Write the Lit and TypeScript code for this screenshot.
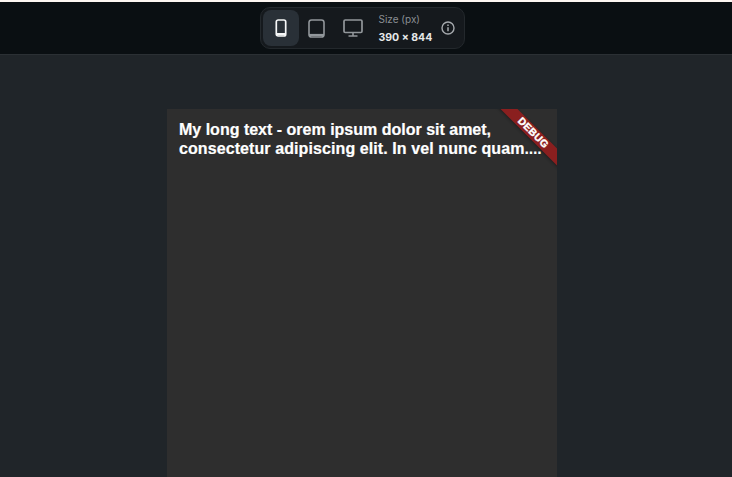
import { LitElement, html, css } from 'lit';
import { customElement } from 'lit/decorators.js';

@customElement('app-root')
export class AppRoot extends LitElement {
  static styles = css`
    :host {
      display: block;
      height: 477px;
      overflow: hidden;
      background: #202529;
      font-family: 'Inter', 'Liberation Sans', sans-serif;
    }

    .topline {
      height: 2px;
      background: #fdf6f2;
    }

    .toolbar {
      height: 53px;
      box-sizing: border-box;
      background: #0a0f12;
      border-bottom: 1px solid #2b3034;
      display: flex;
      justify-content: center;
      padding: 5px 8px 0 0;
    }

    .switcher {
      width: 205px;
      height: 42px;
      box-sizing: border-box;
      padding: 2px;
      display: flex;
      align-items: center;
      background: #15191d;
      border: 1px solid #23282c;
      border-radius: 10px;
    }

    .device {
      width: 36px;
      height: 36px;
      display: flex;
      align-items: center;
      justify-content: center;
      border-radius: 8px;
      color: #92979b;
    }

    .device.active {
      background: #293037;
      color: #f6f7f8;
    }

    .size {
      margin-left: 8px;
      width: 54px;
      display: flex;
      flex-direction: column;
      gap: 6px;
      padding-top: 1px;
    }

    .size-label {
      font-size: 10px;
      line-height: 12px;
      color: #8a8f94;
    }

    .size-value {
      font-size: 10.5px;
      line-height: 13px;
      font-weight: 700;
      color: #e6e8e9;
      white-space: nowrap;
    }

    .info {
      margin-left: 8px;
      display: block;
      color: #a5a9ad;
    }

    .stage {
      display: flex;
      justify-content: center;
      padding: 54px 8px 0 0;
    }

    .phone {
      position: relative;
      width: 390px;
      height: 844px;
      flex: none;
      box-sizing: border-box;
      padding: 11px 12px;
      background: #2e2e2e;
      overflow: hidden;
    }

    .title {
      margin: 0;
      font-family: 'Liberation Sans', Arial, sans-serif;
      font-size: 16px;
      line-height: 19px;
      font-weight: 700;
      color: #ffffff;
      -webkit-text-stroke: 0.2px #ffffff;
    }

    .line {
      display: block;
      white-space: nowrap;
    }

    .line.wide {
      letter-spacing: 0.09px;
    }

    .dots {
      letter-spacing: -0.2px;
      -webkit-text-stroke: 0;
    }

    .banner {
      position: absolute;
      top: 18px;
      right: -36px;
      width: 120px;
      height: 12px;
      transform: rotate(45deg);
      background: #8a1f1f;
      box-shadow: 0 1px 3px rgba(0, 0, 0, 0.35);
      color: #ffffff;
      font-family: 'Liberation Sans', Arial, sans-serif;
      font-size: 10.2px;
      line-height: 12px;
      font-weight: 900;
      text-align: center;
      letter-spacing: 0.4px;
      -webkit-text-stroke: 0.4px #ffffff;
    }
  `;

  render() {
    return html`
      <div class="topline"></div>
      <div class="toolbar">
        <div class="switcher">
          <div class="device active">
            <svg width="12" height="18" viewBox="0 0 12 18" fill="none" stroke="currentColor" stroke-width="1.7">
              <rect x="1.3" y="1" width="9.4" height="16" rx="1.8"></rect>
              <path d="M1.3 15.2h9.4" stroke-width="2.4"></path>
            </svg>
          </div>
          <div class="device">
            <svg width="17" height="19" viewBox="0 0 17 19" fill="none" stroke="currentColor" stroke-width="1.6">
              <rect x="1" y="1" width="15" height="17" rx="2.6"></rect>
              <path d="M1 16h15" stroke-width="2.2"></path>
            </svg>
          </div>
          <div class="device">
            <svg width="20" height="19" viewBox="0 0 20 19" fill="none" stroke="currentColor" stroke-width="1.7">
              <rect x="1" y="1" width="18" height="12.5" rx="1.2"></rect>
              <path d="M10 13.5v3M5.5 17h9" stroke-width="1.6"></path>
            </svg>
          </div>
          <div class="size">
            <span class="size-label">Size (px)</span>
            <span class="size-value">390 × 844</span>
          </div>
          <svg class="info" width="14" height="14" viewBox="0 0 14 14" fill="none" stroke="currentColor" stroke-width="1.4">
            <circle cx="7" cy="7" r="6"></circle>
            <path d="M7 6.2v4" stroke-width="1.5"></path>
            <path d="M7 3.4v1.5" stroke-width="1.5"></path>
          </svg>
        </div>
      </div>
      <div class="stage">
        <div class="phone">
          <p class="title">
            <span class="line">My long text - orem ipsum dolor sit amet,</span>
            <span class="line wide">consectetur adipiscing elit. In vel nunc quam<span class="dots">....</span></span>
          </p>
          <div class="banner">DEBUG</div>
        </div>
      </div>
    `;
  }
}

declare global {
  interface HTMLElementTagNameMap {
    'app-root': AppRoot;
  }
}
